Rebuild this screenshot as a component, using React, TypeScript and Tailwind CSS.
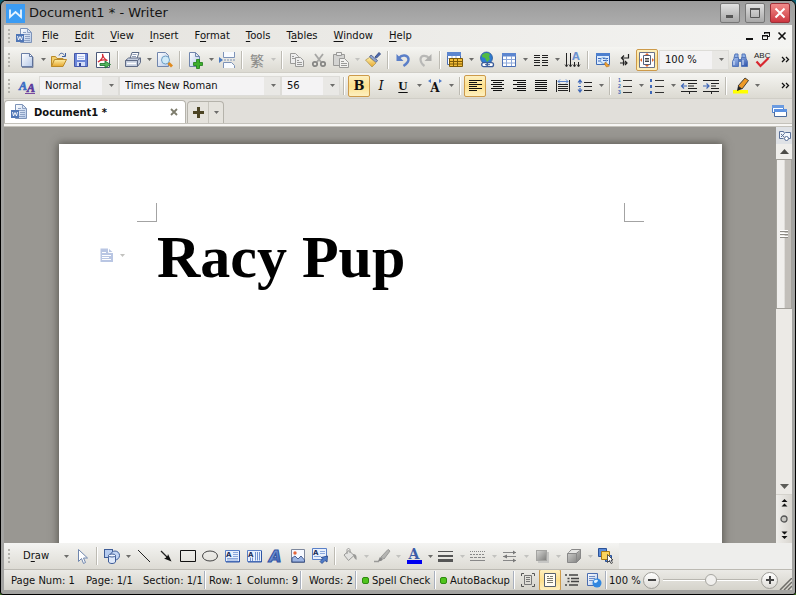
import { useState, type ReactNode } from "react"

interface IconProps {
  children: ReactNode
  size?: number
}

function Icon({ children, size = 16 }: IconProps) {
  return (
    <svg width={size} height={size} viewBox="0 0 16 16" fill="none" className="flex-shrink-0 overflow-visible" aria-hidden="true">
      {children}
    </svg>
  )
}

/* Gradients shared by the icons below */
function IconDefs() {
  return (
    <svg width="0" height="0" className="absolute" aria-hidden="true">
      <defs>
        <linearGradient id="paper" x1="0" y1="0" x2="1" y2="1">
          <stop offset="0" stopColor="#ffffff" />
          <stop offset="1" stopColor="#b4c8e8" />
        </linearGradient>
        <linearGradient id="blue" x1="0" y1="0" x2="1" y2="1">
          <stop offset="0" stopColor="#a9c4f2" />
          <stop offset="1" stopColor="#2b50a8" />
        </linearGradient>
        <linearGradient id="gold" x1="0" y1="0" x2="0" y2="1">
          <stop offset="0" stopColor="#fff0a8" />
          <stop offset="1" stopColor="#e5a52c" />
        </linearGradient>
        <linearGradient id="grey" x1="0" y1="0" x2="1" y2="1">
          <stop offset="0" stopColor="#d8d8d6" />
          <stop offset="1" stopColor="#7c7c7a" />
        </linearGradient>
      </defs>
    </svg>
  )
}

const BLUE = "#3f68b8"
const DIM = "#9a9a98"

const DocIcon = () => (
  <Icon>
    <path d="M4.500.5h7l4 4v10h-11z" fill="url(#paper)" stroke="#7d93b8" />
    <path d="M11.500.5v4h4M7 4.500h3M7 6.500h7M9 8.500h5M9 10.500h5M7 12.500h7" stroke="#8ea2c4" />
    <path d="M0 6h8v8H0z" fill="#4f76b6" />
    <path d="M1.500 8l1 4L4 8.500 5.500 12l1-4" stroke="#fff" strokeWidth=".9" />
  </Icon>
)
const NewIcon = () => (
  <Icon>
    <path d="M2.500 1.500h8l3 3v10h-11z" fill="url(#paper)" stroke="#6a7ea6" />
    <path d="M10.500 1.500v3h3z" fill="#fff" stroke="#6a7ea6" />
    <path d="M3 15.500h11V5" stroke="#3f5078" strokeWidth=".6" />
  </Icon>
)
const OpenIcon = () => (
  <Icon>
    <path d="M.5 14.500v-10h4l1.500 2h6v3" fill="#f2cf6c" stroke="#b98a2a" />
    <path d="M.5 14.500l3-7h12l-3.500 7z" fill="url(#gold)" stroke="#b98a2a" />
    <path d="M8 3.500c1-3 4-3 5.500 0M14.500 1v3.500H11" stroke="#3f5f9e" />
  </Icon>
)
const SaveIcon = () => (
  <Icon>
    <path d="M1.500 1.500h13v13h-13z" fill="#6b86d8" stroke="#4457a8" />
    <path d="M4 2h8v6H4z" fill="#f3f6ff" />
    <path d="M5 4.500h6M5 6.500h6" stroke="#b6c4ea" />
    <path d="M4 10h8v4H4z" fill="#d4ddf8" />
    <path d="M6 11h2v3H6z" fill="#35499a" />
  </Icon>
)
const PdfIcon = () => (
  <Icon>
    <path d="M1.500.5h13v15h-13z" fill="#fff" stroke="#4a5878" />
    <path d="M7.500 2c1 3-1 6-4.500 8 2-2 6-2.500 9.500-1.500C9 7 8 5 7.500 2z" stroke="#d42a35" strokeWidth="1.300" />
    <path d="M5 11.500h5V9l5.500 3.500L10 16v-2.500H5z" fill="#52b45c" stroke="#16702a" strokeWidth=".8" />
  </Icon>
)
const PrintIcon = () => (
  <Icon>
    <path d="M5 6.500L7 .5h7l-2 6z" fill="#fff" stroke="#5a6984" />
    <path d="M7.500 2.500h4M7 4.500h4" stroke="#92a0ba" />
    <path d="M.5 8.500l3-2.500h12v4.500l-3 4H.5z" fill="#c6cfdf" stroke="#5f6b85" />
    <path d="M.5 8.500h12v6M12.500 8.500l3-2.500" stroke="#5f6b85" />
    <path d="M2 11.500h9" stroke="#fff" strokeWidth="1.500" />
  </Icon>
)
const PreviewIcon = () => (
  <Icon>
    <path d="M.5.5h8l3 3v11H.5z" fill="url(#paper)" stroke="#7186ad" />
    <circle cx="8.500" cy="8" r="4" fill="#cfeaf8" stroke="#6f9fc4" />
    <path d="M11.500 11l3.500 3.500" stroke="#e08a1e" strokeWidth="2.800" />
  </Icon>
)
const AddPageIcon = () => (
  <Icon>
    <path d="M2.500.5h6l4 4v10h-10z" fill="url(#paper)" stroke="#7186ad" />
    <path d="M8.500.5v4h4" stroke="#7186ad" />
    <path d="M9.500 7.500h3v3h3v3h-3v3h-3v-3h-3v-3h3z" fill="#3fae2c" stroke="#1d7d18" strokeWidth=".8" />
  </Icon>
)
const BreakIcon = () => (
  <Icon>
    <path d="M4.500 0v5.500h11V0M4.500 16v-5.500h8l3 3V16" fill="#f8fbff" stroke="#7d93b8" />
    <path d="M5 8h11" stroke="#7d93b8" strokeDasharray="2 1" />
    <path d="M0 5l4 3-4 3z" fill="#4a7ac0" />
  </Icon>
)
const CopyIcon = () => (
  <Icon>
    <path d="M1.500 1.500h5l3 3v7h-8z" fill="#eee" stroke={DIM} />
    <path d="M6.500 5.500h5l3 3v6h-8z" fill="#eee" stroke={DIM} />
    <path d="M3 4.500h2M3 6.500h3M8 8.500h2M8 10.500h5M8 12.500h5" stroke={DIM} />
  </Icon>
)
const CutIcon = () => (
  <Icon>
    <path d="M4 2l6 8M12 2L6 10" stroke="#a6a6a4" strokeWidth="1.800" />
    <circle cx="4" cy="12" r="2.200" stroke="#858583" strokeWidth="1.700" />
    <circle cx="12" cy="12" r="2.200" stroke="#858583" strokeWidth="1.700" />
  </Icon>
)
const PasteIcon = () => (
  <Icon>
    <path d="M.5 2.500h11v11H.5z" fill="#d4d4d2" stroke={DIM} />
    <path d="M3.500.5h5v3h-5z" fill="#eee" stroke={DIM} />
    <path d="M6.500 6.500h5l4 4v5h-9z" fill="#f2f2f0" stroke={DIM} />
    <path d="M8 9.500h3M8 11.500h6M8 13.500h6" stroke={DIM} />
  </Icon>
)
const BrushIcon = () => (
  <Icon>
    <path d="M10 5l4-4.500 1.500 1.500L11.500 6z" fill="#4a68b4" stroke="#3a5286" />
    <path d="M6 3l6.500 5.500-1.500 2L4.500 5z" fill="#8fa4d0" stroke="#5a6c98" />
    <path d="M4.500 5.500l6.500 5.500-4 4L.5 8z" fill="url(#gold)" stroke="#b09858" strokeWidth=".8" />
  </Icon>
)
const UndoIcon = () => (
  <Icon>
    <path d="M4 6c3-4 9-3 9.500 1 .3 3-2 5-5 7" stroke="#5b7fc8" strokeWidth="2.400" />
    <path d="M1.500 2v7h7z" fill="#5b7fc8" />
  </Icon>
)
const RedoIcon = () => (
  <Icon>
    <path d="M12 6C9 3 4 3 3.500 7c0 3 1 5 4 7" stroke="#b8b8b6" strokeWidth="2.200" />
    <path d="M14.500 2v7h-7z" fill="#b0b0ae" />
  </Icon>
)
const TableGoldIcon = () => (
  <Icon>
    <path d="M.5.5h13v12H.5z" fill="#fff" stroke="#4a6eb4" />
    <path d="M0 0h14v4H0z" fill="#5c86cf" />
    <path d="M1 6.500h12M5 4v8M9 4v8" stroke="#9cb4de" />
    <path d="M2.500 6.500h13v8h-13z" fill="#f3bd38" stroke="#7d5a08" />
    <path d="M3 9.500h12M3 12h12M6.500 7v7M10.500 7v7" stroke="#7d5a08" />
  </Icon>
)
const GlobeIcon = () => (
  <Icon>
    <circle cx="7.500" cy="6" r="6" fill="#2f7bd0" stroke="#1c4c8c" strokeWidth=".7" />
    <path d="M3 3c3-3 6-2 8-1l-1 3 1 2-3 3-2-4-3-1z" fill="#52bb42" />
    <rect x="2.700" y="10.700" width="6.500" height="4" rx="2" fill="#fff" stroke="#3b5c9a" strokeWidth="1.300" />
    <rect x="8" y="10.700" width="6.500" height="4" rx="2" fill="#fff" stroke="#3b5c9a" strokeWidth="1.300" />
    <path d="M6 12.700h5" stroke="#3b5c9a" />
  </Icon>
)
const TableIcon = () => (
  <Icon>
    <path d="M1.500 1.500h13v13h-13z" fill="#fff" stroke="#4a6eb4" />
    <path d="M1 1h14v3.500H1z" fill="#5c86cf" />
    <path d="M2 7.500h12M2 11h12M5.500 4v10M10.500 4v10" stroke="#8ca8da" />
  </Icon>
)
const ColumnsIcon = () => (
  <Icon>
    <path d="M1 3.500h6M1 5.500h6M1 8.500h6M1 10.500h6M1 13.500h6M9 3.500h6M9 5.500h6M9 8.500h6M9 10.500h6M9 13.500h6" stroke="#222" />
  </Icon>
)
const VerticalIcon = () => (
  <Icon>
    <path d="M1.500 1v13M5.500 1v13M9.500 10v4M13.500 10v4" stroke="#222" />
    <path d="M0 12.500l1.500 2.500L3 12.500M4 12.500l1.500 2.500L7 12.500M8 12.500l1.500 2.500 1.500-2.500M12 12.500l1.500 2.500 1.500-2.500" stroke="#222" strokeWidth=".8" />
    <text x="7" y="8" fontSize="10" fontWeight="bold" fill="#6d92d0">A</text>
  </Icon>
)
const InspectIcon = () => (
  <Icon>
    <path d="M1.500 1.500h13v11h-13z" fill="#dcebfd" stroke="#3e6cb8" />
    <path d="M1 1h14v3H1z" fill="#4d80ce" />
    <path d="M3 6.500h3M3 9h3M8 6.500h5M8 8.500h5" stroke={BLUE} />
    <circle cx="8.500" cy="8.500" r="3" stroke="#78aadc" />
    <path d="M10.500 10l4 4-3 1-2-3z" fill="#efa030" stroke="#a8630e" strokeWidth=".5" />
  </Icon>
)
const MarksIcon = () => (
  <Icon>
    <path d="M11.500 2v4H4.500M7 3.500L4.500 6 7 8.500" stroke="#222" strokeWidth="1.200" />
    <path d="M3 11h7M6.500 8.500v5M8 9l2 2-2 2" stroke="#222" strokeWidth="1.200" />
  </Icon>
)
const PageBorderIcon = () => (
  <Icon>
    <path d="M.5.5h15v15H.5z" fill="#fdfdfd" stroke="#6a7288" />
    <path d="M4.500 3.500h7v9h-7z" fill="#fff" stroke="#55617c" />
    <path d="M6 6.500h4M6 8h4M6 9.500h4" stroke="#444" />
    <path d="M8 1l2 2H6zM8 15l2-2H6zM1 8l2-2v4zM15 8l-2-2v4z" fill="#e0662a" />
  </Icon>
)
const FindIcon = () => (
  <Icon>
    <path d="M2 6l1-4h3v4M10 6V2h3l1 4" fill="#8fb0e6" stroke="#5577b8" />
    <path d="M.5 14.500v-5l2-4h4v9zM9.500 14.500v-9h4l2 4v5z" fill="url(#blue)" stroke="#5577b8" />
    <path d="M7 7h2v3H7z" fill="#5577b8" />
    <path d="M2 9v4M11 8v5" stroke="#dbe7fb" />
  </Icon>
)
const SpellIcon = () => (
  <Icon>
    <text x="0" y="6" fontSize="8" fill="#222" className="font-['Liberation_Sans']">ABC</text>
    <path d="M2.500 9.500l4 4.500 8-8" stroke="#d8272f" strokeWidth="2.200" />
  </Icon>
)

const StylesIcon = () => (
  <Icon>
    <g className="font-['Liberation_Serif']" fontSize="12" fontWeight="bold" fontStyle="italic" strokeWidth=".6">
      <text x="0" y="12" fill="#3a6cc4" stroke="#3a6cc4">A</text>
      <text x="8" y="14" fill="#5a3a9c" stroke="#5a3a9c">A</text>
    </g>
    <path d="M6 15.500h10" stroke="#7a4aa0" />
  </Icon>
)
interface AlignProps {
  rows: string
}
const AlignIcon = ({ rows }: AlignProps) => (
  <Icon>
    <path d={rows} stroke="#111" />
  </Icon>
)
const DistributeIcon = () => (
  <Icon>
    <path d="M1.500 2v12M14.500 2v12M3 6.500h10M3 8.500h10M3 10.500h10M3 12.500h10" stroke="#222" />
    <path d="M3 3.500h10M5 1.500l-2 2 2 2M11 1.500l2 2-2 2" stroke="#5d86cc" />
  </Icon>
)
const LineSpacingIcon = () => (
  <Icon>
    <path d="M7 4.500h8M7 8.500h8M7 12.500h8" stroke="#222" />
    <path d="M3 2v4M1 4.500L3 2l2 2.500M3 10v4M1 11.500L3 14l2-2.500M1 8.500h3" stroke={BLUE} strokeWidth="1.200" />
  </Icon>
)
const NumberedIcon = () => (
  <Icon>
    <path d="M6 2.500h9M6 8.500h9M6 14.500h9" stroke="#333" />
    <g className="font-['Liberation_Sans']" fontSize="5" fontWeight="bold" fill={BLUE}>
      <text x="1" y="4">1</text>
      <text x="1" y="10">2</text>
      <text x="1" y="16">3</text>
    </g>
  </Icon>
)
const BulletsIcon = () => (
  <Icon>
    <path d="M6 2.500h9M6 8.500h9M6 14.500h9" stroke="#333" />
    <path d="M1 1h2v3H1zM1 7h2v3H1zM1 13h2v3H1z" fill={BLUE} />
  </Icon>
)
const OutdentIcon = () => (
  <Icon>
    <path d="M0 2.500h16M7 5.500h9M7 8h6M7 10.500h9M0 13.500h16M8.500 13v3" stroke="#222" />
    <path d="M0 8h6M3 5.500L.5 8 3 10.500" stroke={BLUE} strokeWidth="1.200" />
  </Icon>
)
const IndentIcon = () => (
  <Icon>
    <path d="M0 2.500h16M8 5.500h8M8 8h5M8 10.500h8M0 13.500h16M8.500 13v3" stroke="#222" />
    <path d="M0 8h6M3.500 5.500L6 8l-2.500 2.500" stroke={BLUE} strokeWidth="1.200" />
  </Icon>
)
const HighlightIcon = () => (
  <Icon>
    <path d="M0 12h15v3.500H0z" fill="#ffff00" />
    <path d="M5 8l7-8 3.500 2.500L9 11z" fill="#ee9a28" stroke="#222" strokeWidth=".8" />
    <path d="M5 8l4 3-5 2z" fill="#222" />
  </Icon>
)

const PointerIcon = () => (
  <Icon>
    <path d="M4.500 1.500v12l3-3 2 5 2-1-2-4.500h4z" fill="#fff" stroke="#6f86ae" />
  </Icon>
)
const ShapesIcon = () => (
  <Icon>
    <rect x=".5" y="1.500" width="8" height="8" fill="#b6ccf0" stroke="#3f5d98" />
    <circle cx="11" cy="7.500" r="4.500" fill="#c4d6f4" stroke="#3f5d98" />
    <path d="M4.500 7.500h7v6.500c-1 2-6 2-7 0z" fill="#dfe9fa" stroke="#3f5d98" />
    <ellipse cx="8" cy="7.500" rx="3.500" ry="1.500" fill="#f4f8ff" stroke="#3f5d98" />
  </Icon>
)
const LineIcon = () => (
  <Icon>
    <path d="M2 2l12 12" stroke="#222" />
  </Icon>
)
const ArrowIcon = () => (
  <Icon>
    <path d="M3 3l7 7" stroke="#222" strokeWidth="1.200" />
    <path d="M13.500 13.500L6 10.500l1.500-.5 2-2 .5-2z" fill="#111" />
  </Icon>
)
const RectIcon = () => (
  <Icon>
    <path d="M.5 2.500h15v11H.5z" stroke="#111" />
  </Icon>
)
const EllipseIcon = () => (
  <Icon>
    <ellipse cx="8" cy="8" rx="7.500" ry="5" stroke="#444" />
  </Icon>
)
const TextBoxIcon = () => (
  <Icon>
    <path d="M1.500 2.500h14v11h-14z" fill="#e9f0fc" stroke="#5a80c8" />
    <path d="M9 4.500h5M9 6.500h5M9 8.500h5M3 10.500h11M3 12h11" stroke="#8ba8dc" />
    <path d="M15.500 3v11H2" stroke="#2f55a4" />
    <text x="2" y="9" fontSize="7" fontWeight="bold" fill="#1a2c58">A</text>
  </Icon>
)
const VTextBoxIcon = () => (
  <Icon>
    <path d="M1.500 2.500h14v11h-14z" fill="#e9f0fc" stroke="#5a80c8" />
    <path d="M4.500 9.500V13M6.500 9.500V13M9.500 4v8.500M11.500 4v8.500M13.500 4v8.500" stroke="#6f92d0" />
    <path d="M15.500 3v11H2" stroke="#2f55a4" />
    <text x="2" y="9" fontSize="7" fontWeight="bold" fill="#1a2c58">A</text>
  </Icon>
)
const WordArtIcon = () => (
  <Icon>
    <text x="1" y="14" fontSize="16" fontWeight="bold" fontStyle="italic" fill="url(#blue)" stroke="#3457a6" strokeWidth="1.200">A</text>
  </Icon>
)
const PictureIcon = () => (
  <Icon>
    <path d="M1.500 1.500h13v13h-13z" fill="#f7f9ff" stroke="#7d879c" />
    <path d="M2 14v-4l3-2 3 3 3-3 3.500 4v2z" fill="#9cb4e2" stroke="#2c447e" strokeWidth=".8" />
    <circle cx="5" cy="5" r="1.700" fill="#e5663a" />
  </Icon>
)
const TextFrameIcon = () => (
  <Icon>
    <path d="M.5.5h14v11H.5z" fill="#e9f0fc" stroke="#5a80c8" />
    <path d="M8 3.500h5M8 5.500h5M2 8.500h7" stroke="#8ba8dc" />
    <text x="1" y="7" fontSize="7" fontWeight="bold" fill="#1a2c58">A</text>
    <path d="M9 9.500l6.500-1.500-.5 6-2-1.500-3 3-2-2 3-3z" fill="#4f7bc8" stroke="#24458a" strokeWidth=".8" />
  </Icon>
)
const FillIcon = () => (
  <Icon>
    <path d="M2 7l5-4.500 5 5-5.500 5z" fill="#e2e2e0" stroke={DIM} />
    <path d="M5 6V2c0-2 3-2 3 0v3" stroke={DIM} />
    <path d="M11 6c3 0 4 2 3.500 6-2-1-3-3-3.500-6z" fill={DIM} />
  </Icon>
)
const PenIcon = () => (
  <Icon>
    <path d="M7 9l7-7.500 2 1.500-6 8z" fill="#b4b4b2" stroke={DIM} />
    <path d="M6 9l3 2c-1 2-3 2.500-5 2 1-1 1-3 2-4z" fill="#888" />
    <path d="M0 13.500h5" stroke={DIM} strokeWidth="1.500" />
  </Icon>
)
const LineWidthIcon = () => (
  <Icon>
    <path d="M0 3.500h15" stroke="#555" />
    <path d="M0 8h15" stroke="#555" strokeWidth="2" />
    <path d="M0 12.500h15" stroke="#555" strokeWidth="3" />
  </Icon>
)
const DashIcon = () => (
  <Icon>
    <path d="M0 3.500h15" stroke="#888" strokeDasharray="1 1" />
    <path d="M0 6.500h15" stroke="#888" strokeDasharray="2 1" />
    <path d="M0 9.500h15" stroke="#888" strokeDasharray="3 1" />
    <path d="M0 12.500h15" stroke="#888" />
  </Icon>
)
const ArrowStyleIcon = () => (
  <Icon>
    <path d="M1 4.500h13M1 8.500h13M1 12.500h13" stroke="#888" />
    <path d="M11 2.500l3 2-3 2zM5 6.500l-4 2 4 2zM11 10.500l3 2-3 2z" fill="#777" />
  </Icon>
)
const ShadowIcon = () => (
  <Icon>
    <rect x="4" y="4" width="11" height="11" fill="#c6c6c4" />
    <rect x="2.500" y="2.500" width="10" height="10" fill="url(#grey)" stroke="#a4a4a2" />
  </Icon>
)
const CubeIcon = () => (
  <Icon>
    <path d="M1.500 5.500l4-4h9v9l-4 4h-9z" fill="url(#grey)" stroke="#888" />
    <path d="M1.500 5.500h9v9M10.500 5.500l4-4" stroke="#888" />
    <path d="M2 5l4-3h8l-4 3z" fill="#e6e6e4" />
  </Icon>
)
const SelectObjectsIcon = () => (
  <Icon>
    <path d="M.5.5h8v8h-8z" fill="#5a8bd8" stroke="#2c5297" />
    <path d="M7.500 7.500h6v6h-6z" fill="#5a8bd8" stroke="#2c5297" />
    <path d="M3.500 3.500h8v8h-8z" fill="#fbd45c" stroke="#a87a14" />
    <path d="M9.500 6.500v8l2-2 1.500 3 1.500-.7-1.500-2.800H15z" fill="#fff" stroke="#333" strokeWidth=".8" />
  </Icon>
)

const FullScreenIcon = () => (
  <Icon>
    <path d="M1.500 4V1.500H4M12 1.500h2.500V4M1.500 12v2.500H4M12 14.500h2.500V12" stroke="#555" />
    <path d="M4.500 3.500h7v9h-7zM6 5.500h4M6 7.500h4M6 9.500h4" stroke="#777" />
  </Icon>
)
const PageViewIcon = () => (
  <Icon>
    <path d="M2.500 1.500h11v13h-11z" fill="#fffdf2" stroke="#55606e" />
    <path d="M5 4.500h2M8 4.500h3M5 6.500h6M5 8.500h6M5 10.500h6" stroke="#7a7a70" />
  </Icon>
)
const OutlineIcon = () => (
  <Icon>
    <path d="M5 3h9M7 6.500h8M7 9.500h8M5 13h9" stroke="#444" strokeWidth="1.400" />
    <path d="M1 3h2M3.500 6.500h2M3.500 9.500h2M1 13h2" stroke="#444" strokeWidth="1.400" />
  </Icon>
)
const WebViewIcon = () => (
  <Icon>
    <path d="M1.500 1.500h10v12h-10z" fill="url(#paper)" stroke="#4a6db0" />
    <path d="M3 4.500h6M3 6.500h6M3 8.500h4" stroke="#6f8dc6" />
    <circle cx="11" cy="11" r="4.500" fill="#3187e0" />
    <path d="M8 9c2-2 4-1 4 0l-2 2-2-.5z" fill="#dff2ff" />
  </Icon>
)

interface CaretProps {
  dim?: boolean
}

function Caret({ dim }: CaretProps) {
  return (
    <svg width="5" height="3" viewBox="0 0 5 3" className="flex-shrink-0" aria-hidden="true">
      <path d="M0 0h5L2.500 3z" fill={dim ? "#c2c2bf" : "#6c6c6a"} />
    </svg>
  )
}

interface ToolProps {
  label: string
  icon: ReactNode
  active?: boolean
}

function Tool({ label, icon, active }: ToolProps) {
  return (
    <button
      aria-label={label}
      title={label}
      aria-pressed={active}
      className={`flex h-[22px] w-[22px] flex-shrink-0 items-center justify-center rounded-[2px] ${
        active ? "border border-[#cd9a4a] bg-linear-to-b from-[#fdf0c0] via-[#fde08c] to-[#fdf0c0]" : "hover:bg-white/60"
      }`}
    >
      {icon}
    </button>
  )
}

interface MoreProps {
  label: string
  dim?: boolean
}

function More({ label, dim }: MoreProps) {
  return (
    <button aria-label={label} className="flex h-[22px] w-[10px] flex-shrink-0 items-center justify-center">
      <Caret dim={dim} />
    </button>
  )
}

function Sep() {
  return (
    <span className="flex w-2 flex-shrink-0 justify-center">
      <span className="h-[18px] w-[2px] border-l border-[#bdbbb3] bg-white" />
    </span>
  )
}

function Grip() {
  return (
    <span className="flex w-3 flex-shrink-0 flex-col gap-[2px] pl-1">
      <span className="h-[2px] w-[2px] bg-[#b3b2ac]" />
      <span className="h-[2px] w-[2px] bg-[#b3b2ac]" />
      <span className="h-[2px] w-[2px] bg-[#b3b2ac]" />
      <span className="h-[2px] w-[2px] bg-[#b3b2ac]" />
    </span>
  )
}

interface ComboProps {
  label: string
  options: string[]
  width: string
}

function Combo({ label, options, width }: ComboProps) {
  return (
    <label className={`flex h-5 flex-shrink-0 items-center border border-[#dddcd8] bg-[#e9e8e5] pr-1 ${width}`}>
      <select aria-label={label} className="h-full min-w-0 flex-1 appearance-none bg-[#f4f3f4] pl-[5px] outline-none">
        {options.map((o) => (
          <option key={o}>{o}</option>
        ))}
      </select>
      <span className="flex w-[12px] justify-end">
        <Caret />
      </span>
    </label>
  )
}

function Overflow() {
  return (
    <button aria-label="More buttons" className="ml-auto flex h-[22px] w-[14px] items-center justify-center">
      <svg width="9" height="7" viewBox="0 0 9 7" fill="none" aria-hidden="true">
        <path d="M1 1l2.500 2.500L1 6M5 1l2.500 2.500L5 6" stroke="#111" strokeWidth="1.300" />
      </svg>
    </button>
  )
}

const BAR = "flex h-[26px] flex-shrink-0 items-center overflow-hidden border-b border-[#d0cec7] bg-linear-to-b from-[#f5f5f2] to-[#dcdad2]"

function TitleBar() {
  const btn = "flex h-5 w-5 items-center justify-center rounded-[2px] border"
  return (
    <header className="flex h-6 flex-shrink-0 items-center bg-linear-to-b from-[#9c9c9c] to-[#adadad] pr-[2px] pl-[2px]">
      <svg width="19" height="19" viewBox="0 0 19 19" fill="none" aria-hidden="true">
        <rect width="19" height="19" fill="#3b9cf4" />
        <path d="M4 5.500v7.500l5.500-5 5.500 5V5.500" stroke="#e8f4ff" strokeWidth="1.800" />
      </svg>
      <h1 className="ml-1 flex-1 text-[13px] leading-5 text-[#151515]">Document1 * - Writer</h1>
      <div className="flex gap-[5px]">
        <button aria-label="Minimize" className={`${btn} border-[#777] bg-linear-to-b from-[#e2e2e2] to-[#a8a8a8]`}>
          <svg width="12" height="12" viewBox="0 0 12 12" aria-hidden="true">
            <path d="M2 8h7v3H2z" fill="#555" />
          </svg>
        </button>
        <button aria-label="Maximize" className={`${btn} border-[#777] bg-linear-to-b from-[#e2e2e2] to-[#a8a8a8]`}>
          <svg width="12" height="12" viewBox="0 0 12 12" fill="none" aria-hidden="true">
            <path d="M1.500 1.500h9v9h-9z" stroke="#555" />
            <path d="M1 1h10v2H1z" fill="#555" />
          </svg>
        </button>
        <button aria-label="Close" className={`${btn} border-[#9c3038] bg-linear-to-b from-[#f08b8b] to-[#cd3440]`}>
          <svg width="12" height="12" viewBox="0 0 12 12" fill="none" aria-hidden="true">
            <path d="M1.500 1.500l9 9M10.500 1.500l-9 9" stroke="#fff" strokeWidth="2" />
          </svg>
        </button>
      </div>
    </header>
  )
}

/* [before, mnemonic, after] */
const MENUS = [
  ["", "F", "ile"],
  ["", "E", "dit"],
  ["", "V", "iew"],
  ["", "I", "nsert"],
  ["F", "o", "rmat"],
  ["", "T", "ools"],
  ["T", "a", "bles"],
  ["", "W", "indow"],
  ["", "H", "elp"],
]

function MenuBar() {
  return (
    <nav className="flex h-[22px] flex-shrink-0 items-center bg-linear-to-r from-[#e4e2dd] to-[#f4f4f2]">
      <Grip />
      <DocIcon />
      <div className="flex flex-1 gap-4 pl-[10px]">
        {MENUS.map(([pre, key, post]) => (
          <button key={pre + key + post} className="leading-4">
            {pre}
            <span className="underline underline-offset-2">{key}</span>
            {post}
          </button>
        ))}
      </div>
      <div className="flex items-center gap-[2px] pr-[3px]">
        <button aria-label="Minimize document" className="flex h-4 w-[14px] items-center justify-center">
          <svg width="10" height="10" viewBox="0 0 10 10" aria-hidden="true">
            <path d="M1 7h7v2H1z" fill="#111" />
          </svg>
        </button>
        <button aria-label="Restore document" className="flex h-4 w-[14px] items-center justify-center">
          <svg width="10" height="10" viewBox="0 0 10 10" fill="none" aria-hidden="true">
            <path d="M3.500 3V1.500h5v4H7M1.500 4.500h5v4h-5z" stroke="#111" />
            <path d="M3 1h6v1.500H3zM1 4h6v1.500H1z" fill="#111" />
          </svg>
        </button>
        <button aria-label="Close document" className="flex h-4 w-[14px] items-center justify-center">
          <svg width="10" height="10" viewBox="0 0 10 10" fill="none" aria-hidden="true">
            <path d="M1.500 1.500l7 7M8.500 1.500l-7 7" stroke="#111" strokeWidth="1.600" />
          </svg>
        </button>
      </div>
    </nav>
  )
}

function StandardBar() {
  return (
    <div role="toolbar" aria-label="Standard" className={BAR}>
      <Grip />
      <Tool label="New" icon={<NewIcon />} />
      <More label="New options" />
      <Tool label="Open" icon={<OpenIcon />} />
      <Tool label="Save" icon={<SaveIcon />} />
      <Tool label="Export to PDF" icon={<PdfIcon />} />
      <Sep />
      <Tool label="Print" icon={<PrintIcon />} />
      <More label="Print options" />
      <Tool label="Print Preview" icon={<PreviewIcon />} />
      <Sep />
      <Tool label="Insert Page" icon={<AddPageIcon />} />
      <More label="Page options" />
      <Tool label="Break" icon={<BreakIcon />} />
      <Sep />
      <Tool
        label="Chinese Conversion"
        icon={<span className="font-['Noto_Sans_CJK_TC',sans-serif] text-[14px] leading-4 text-[#8a8a88]">繁</span>}
      />
      <More label="Chinese Conversion options" dim />
      <Sep />
      <Tool label="Copy" icon={<CopyIcon />} />
      <Tool label="Cut" icon={<CutIcon />} />
      <Tool label="Paste" icon={<PasteIcon />} />
      <More label="Paste options" dim />
      <Tool label="Format Painter" icon={<BrushIcon />} />
      <Sep />
      <Tool label="Undo" icon={<UndoIcon />} />
      <Tool label="Redo" icon={<RedoIcon />} />
      <Sep />
      <Tool label="Table Tools" icon={<TableGoldIcon />} />
      <More label="Table Tools options" />
      <Tool label="Hyperlink" icon={<GlobeIcon />} />
      <Tool label="Insert Table" icon={<TableIcon />} />
      <More label="Table options" />
      <Tool label="Columns" icon={<ColumnsIcon />} />
      <More label="Columns options" />
      <Tool label="Text Direction" icon={<VerticalIcon />} />
      <Sep />
      <Tool label="Inspect" icon={<InspectIcon />} />
      <Tool label="Show Marks" icon={<MarksIcon />} />
      <Tool label="Page Borders" icon={<PageBorderIcon />} active />
      <Combo label="Zoom" options={["100 %", "75 %", "50 %"]} width="w-[70px] ml-px" />
      <Tool label="Find" icon={<FindIcon />} />
      <Tool label="Spell Check" icon={<SpellIcon />} />
      <Overflow />
    </div>
  )
}

function FormatBar() {
  return (
    <div role="toolbar" aria-label="Formatting" className={BAR}>
      <Grip />
      <Tool label="Styles" icon={<StylesIcon />} />
      <Combo label="Style" options={["Normal", "Heading 1"]} width="w-[80px] ml-px" />
      <Combo label="Font" options={["Times New Roman", "Arial"]} width="w-[162px]" />
      <Combo label="Font size" options={["56", "12", "10"]} width="w-[59px]" />
      <Sep />
      <Tool label="Bold" active icon={<b className="font-['DejaVu_Serif'] text-[13px] leading-4">B</b>} />
      <Tool label="Italic" icon={<i className="font-['DejaVu_Serif'] text-[13px] leading-4">I</i>} />
      <Tool label="Underline" icon={<b className="font-['Liberation_Serif'] text-[13px] leading-4 underline underline-offset-2">U</b>} />
      <More label="Underline options" />
      <Tool
        label="Character Scale"
        icon={
          <span className="flex flex-col items-center">
            <svg width="14" height="4" viewBox="0 0 14 4" aria-hidden="true">
              <path d="M0 2l3-2v4zM14 2l-3-2v4z" fill="#4f7bc8" />
            </svg>
            <b className="font-['DejaVu_Serif'] text-[12px] leading-[10px]">A</b>
          </span>
        }
      />
      <More label="Character Scale options" />
      <Sep />
      <Tool label="Align Left" active icon={<AlignIcon rows="M2 2.500h13M2 4.500h8M2 6.500h13M2 8.500h8M2 10.500h13M2 12.500h8" />} />
      <Tool label="Center" icon={<AlignIcon rows="M2 2.500h13M4 4.500h9M2 6.500h13M4 8.500h9M2 10.500h13M4 12.500h9" />} />
      <Tool label="Align Right" icon={<AlignIcon rows="M2 2.500h13M6 4.500h9M2 6.500h13M6 8.500h9M2 10.500h13M6 12.500h9" />} />
      <Tool label="Justify" icon={<AlignIcon rows="M2 2.500h12M2 4.500h12M2 6.500h12M2 8.500h12M2 10.500h12M2 12.500h12" />} />
      <Tool label="Distribute" icon={<DistributeIcon />} />
      <Tool label="Line Spacing" icon={<LineSpacingIcon />} />
      <More label="Line Spacing options" />
      <Sep />
      <Tool label="Numbering" icon={<NumberedIcon />} />
      <More label="Numbering options" />
      <Tool label="Bullets" icon={<BulletsIcon />} />
      <More label="Bullets options" />
      <Tool label="Decrease Indent" icon={<OutdentIcon />} />
      <Tool label="Increase Indent" icon={<IndentIcon />} />
      <Sep />
      <Tool label="Highlight" icon={<HighlightIcon />} />
      <More label="Highlight options" />
      <Overflow />
    </div>
  )
}

function TabBar() {
  return (
    <div className="flex-shrink-0 bg-[#e1dfda]">
      <div className="flex h-6 items-end pr-1">
        <div className="flex h-[23px] w-[182px] items-center rounded-t-[4px] border border-b-0 border-[#b5b3ab] bg-white pr-[5px] pl-[6px]">
          <DocIcon />
          <span className="ml-[7px] flex-1 font-bold">Document1 *</span>
          <button aria-label="Close tab" className="flex h-4 w-3 items-center justify-center">
            <svg width="8" height="8" viewBox="0 0 8 8" fill="none" aria-hidden="true">
              <path d="M1 1l6 6M7 1L1 7" stroke="#7d7c6c" strokeWidth="1.800" />
            </svg>
          </button>
        </div>
        <div className="ml-px flex h-[22px] rounded-t-[4px] border border-b-0 border-[#b5b3ab] bg-[#e5e3dd]">
          <button aria-label="New tab" className="flex w-[21px] items-center justify-center border-r border-[#c8c6be]">
            <svg width="11" height="11" viewBox="0 0 11 11" aria-hidden="true">
              <path d="M4 0h3v4h4v3H7v4H4V7H0V4h4z" fill="#4c4423" />
            </svg>
          </button>
          <button aria-label="Tab list" className="flex w-[14px] items-center justify-center">
            <Caret />
          </button>
        </div>
        <button aria-label="Arrange windows" className="ml-auto flex h-6 w-4 items-center justify-center">
          <Icon>
            <path d="M.5 2.500h11v7H.5z" fill="#fff" stroke="#4d7fcb" />
            <path d="M0 2h12v3H0z" fill="#6b9be0" />
            <path d="M2.500 6.500h12v7h-12z" fill="#fff" stroke="#4a6a9c" />
            <path d="M2 6h13v3H2z" fill="#5c92e2" />
          </Icon>
        </button>
      </div>
      <div className="h-1 border-t border-b border-t-[#c4c2bb] border-b-[#c4c2bb] bg-[#f7f6f4]" />
    </div>
  )
}

function Page() {
  return (
    <main className="min-w-0 flex-1 overflow-hidden bg-[#999792] pt-[17px] pl-px">
      <article className="mx-auto h-[900px] w-[663px] max-w-full bg-white shadow-[0_0_8px_1px_rgba(60,58,52,0.7)]">
        <div className="flex justify-between px-[78px] pt-[59px]">
          <span className="h-[19px] w-5 border-r border-b border-[#a3a3a3]" />
          <span className="h-[19px] w-5 border-b border-l border-[#a3a3a3]" />
        </div>
        <div className="flex items-center pl-[41px]">
          <button aria-label="Paragraph layout" className="flex w-[57px] items-center gap-[6px] pb-1">
            <svg width="14" height="16" viewBox="0 0 14 16" fill="none" aria-hidden="true">
              <path d="M.5 1.500h8l4.500 4v9.500H.5z" fill="#b9c6e3" />
              <path d="M8.500 1v4.500H13M2 5.500h4M2 8.500h9M2 10.500h7M2 12.500h9" stroke="#fff" />
            </svg>
            <Caret dim />
          </button>
          <h2 className="font-['Liberation_Serif'] text-[60px] leading-[70px] font-bold text-black">Racy Pup</h2>
        </div>
      </article>
    </main>
  )
}

function ScrollBar() {
  const nav = "flex h-4 w-full items-center justify-center"
  return (
    <div className="flex w-4 flex-shrink-0 flex-col bg-[#eceae6]">
      <button aria-label="Browse" className="flex h-[17px] items-center justify-center bg-[#dfe2e6]">
        <svg width="13" height="13" viewBox="0 0 13 13" fill="none" aria-hidden="true">
          <path d="M1.500 2.500h4l1 2 1-1h5v6h-3M1.500 2.500v7h4" fill="#f2f6fc" stroke="#5a7098" />
          <path d="M3 5l3 3M6 5L3 8" stroke="#5a7098" />
          <circle cx="8.500" cy="9.500" r="2" fill="#fff" stroke="#5a7098" />
        </svg>
      </button>
      <button aria-label="Scroll up" className="flex h-[15px] items-center justify-center bg-[#efeeeb]">
        <svg width="9" height="5" viewBox="0 0 9 5" aria-hidden="true">
          <path d="M0 5h9L4.500 0z" fill="#4c4c48" />
        </svg>
      </button>
      <div className="flex-1">
        <div className="flex h-[150px] flex-col items-center justify-center gap-px border border-[#a3a19b] bg-linear-to-r from-[#f0efed] from-50% to-[#c2bfba] to-60%">
          <span className="h-[2px] w-2 border-b border-[#8d8b86] bg-white" />
          <span className="h-[2px] w-2 border-b border-[#8d8b86] bg-white" />
          <span className="h-[2px] w-2 border-b border-[#8d8b86] bg-white" />
        </div>
      </div>
      <button aria-label="Scroll down" className={nav}>
        <svg width="9" height="5" viewBox="0 0 9 5" aria-hidden="true">
          <path d="M0 0h9L4.500 5z" fill="#5c5c58" />
        </svg>
      </button>
      <div className="border-t border-[#d4d2cc] bg-linear-to-r from-[#efeeeb] to-[#d8d5cf]">
        <button aria-label="Previous page" className={nav}>
          <svg width="7" height="8" viewBox="0 0 7 8" aria-hidden="true">
            <path d="M3.500 0L6.500 3h-6zM3.500 4.500l3 3h-6z" fill="#111" />
          </svg>
        </button>
        <button aria-label="Select browse object" className={nav}>
          <svg width="8" height="8" viewBox="0 0 8 8" fill="none" aria-hidden="true">
            <circle cx="4" cy="4" r="3" fill="#c9c8c3" stroke="#555" strokeWidth="1.300" />
          </svg>
        </button>
        <button aria-label="Next page" className={nav}>
          <svg width="7" height="8" viewBox="0 0 7 8" aria-hidden="true">
            <path d="M.5.5h6l-3 3zM.5 5h6l-3 3z" fill="#111" />
          </svg>
        </button>
      </div>
    </div>
  )
}

function DrawBar() {
  return (
    <div className="flex-shrink-0 bg-[#eeeeec]">
      <div role="toolbar" aria-label="Drawing" className="flex h-[26px] w-max items-center bg-linear-to-b from-[#f4f4f2] to-[#dddbd4] pr-[2px]">
        <Grip />
        <button className="w-[45px] pl-[7px] text-left leading-4">
          D<span className="underline underline-offset-2">r</span>aw
        </button>
        <More label="Draw options" />
        <Tool label="Select" icon={<PointerIcon />} />
        <Sep />
        <Tool label="AutoShapes" icon={<ShapesIcon />} />
        <More label="AutoShapes options" />
        <Tool label="Line" icon={<LineIcon />} />
        <Tool label="Arrow" icon={<ArrowIcon />} />
        <Tool label="Rectangle" icon={<RectIcon />} />
        <Tool label="Ellipse" icon={<EllipseIcon />} />
        <Tool label="Text Box" icon={<TextBoxIcon />} />
        <Tool label="Vertical Text Box" icon={<VTextBoxIcon />} />
        <Tool label="WordArt" icon={<WordArtIcon />} />
        <Tool label="Picture" icon={<PictureIcon />} />
        <Tool label="Text Frame" icon={<TextFrameIcon />} />
        <Sep />
        <Tool label="Fill Color" icon={<FillIcon />} />
        <More label="Fill options" dim />
        <Tool label="Line Color" icon={<PenIcon />} />
        <More label="Line Color options" dim />
        <Tool
          label="Font Color"
          icon={
            <b className="w-[15px] border-b-4 border-[#0000f0] text-center font-['DejaVu_Serif'] text-[14px] leading-3 text-[#3b5ca8]">
              A
            </b>
          }
        />
        <More label="Font Color options" />
        <Tool label="Line Style" icon={<LineWidthIcon />} />
        <More label="Line Style options" dim />
        <Tool label="Dash Style" icon={<DashIcon />} />
        <More label="Dash Style options" dim />
        <Tool label="Arrow Style" icon={<ArrowStyleIcon />} />
        <More label="Arrow Style options" dim />
        <Tool label="Shadow" icon={<ShadowIcon />} />
        <More label="Shadow options" dim />
        <Tool label="3-D" icon={<CubeIcon />} />
        <More label="3-D options" dim />
        <Tool label="Select Objects" icon={<SelectObjectsIcon />} />
      </div>
    </div>
  )
}

function StatusSep() {
  return <span className="h-[18px] w-[2px] flex-shrink-0 border-l border-[#a9b0bd] bg-white" />
}

function Led() {
  return <span className="h-[7px] w-[7px] flex-shrink-0 rounded-[2px] border border-[#2f8a10] bg-[#4fc41c]" />
}

function StatusBar() {
  const [zoom, setZoom] = useState(50)
  const round = "flex h-[17px] w-[17px] flex-shrink-0 items-center justify-center rounded-full border border-[#9e9d98] bg-linear-to-b from-white to-[#dddbd6]"
  return (
    <footer className="flex h-[21px] flex-shrink-0 items-center overflow-hidden border-t border-[#bcbab3] bg-linear-to-b from-[#ebeae6] to-[#d5d3cb] whitespace-nowrap">
      <span className="w-[75px] flex-shrink-0 pl-[7px]">Page Num: 1</span>
      <span className="w-[57px] flex-shrink-0 pl-[7px]">Page: 1/1</span>
      <span className="w-[68px] flex-shrink-0 pl-[7px]">Section: 1/1</span>
      <StatusSep />
      <span className="w-[38px] flex-shrink-0 pl-[3px]">Row: 1</span>
      <span className="w-[56px] flex-shrink-0 pl-[3px]">Column: 9</span>
      <StatusSep />
      <span className="w-[53px] flex-shrink-0 pl-[7px]">Words: 2</span>
      <StatusSep />
      <button className="flex w-[77px] flex-shrink-0 items-center gap-[3px] pl-[5px]">
        <Led />
        Spell Check
      </button>
      <StatusSep />
      <button className="flex w-[77px] flex-shrink-0 items-center gap-[3px] pl-[4px]">
        <Led />
        AutoBackup
      </button>
      <StatusSep />
      <div className="flex flex-shrink-0 pl-[2px]">
        <Tool label="Full Screen" icon={<FullScreenIcon />} />
        <Tool label="Page View" icon={<PageViewIcon />} active />
        <Tool label="Outline View" icon={<OutlineIcon />} />
        <Tool label="Web View" icon={<WebViewIcon />} />
      </div>
      <StatusSep />
      <span className="w-[36px] flex-shrink-0 pl-[2px]">100 %</span>
      <button aria-label="Zoom out" className={round}>
        <span className="h-[2px] w-2 bg-[#444]" />
      </button>
      <input
        type="range"
        aria-label="Zoom"
        value={zoom}
        onChange={(e) => setZoom(Number(e.target.value))}
        className="mx-[3px] h-4 min-w-0 flex-1 appearance-none bg-transparent [&::-webkit-slider-runnable-track]:h-[2px] [&::-webkit-slider-runnable-track]:border-b [&::-webkit-slider-runnable-track]:border-white [&::-webkit-slider-runnable-track]:bg-[#b8b6b0] [&::-webkit-slider-thumb]:mt-[-5px] [&::-webkit-slider-thumb]:h-3 [&::-webkit-slider-thumb]:w-3 [&::-webkit-slider-thumb]:appearance-none [&::-webkit-slider-thumb]:rounded-full [&::-webkit-slider-thumb]:border [&::-webkit-slider-thumb]:border-[#a6a5a0] [&::-webkit-slider-thumb]:bg-[#f1f0ee]"
      />
      <button aria-label="Zoom in" className={round}>
        <svg width="8" height="8" viewBox="0 0 8 8" aria-hidden="true">
          <path d="M3 0h2v3h3v2H5v3H3V5H0V3h3z" fill="#444" />
        </svg>
      </button>
      <svg width="14" height="12" viewBox="0 0 14 12" fill="none" className="flex-shrink-0 self-end" aria-hidden="true">
        <path d="M2 12L14 0M6 12l8-8M10 12l4-4" stroke="#6e6d68" strokeWidth="1.500" />
      </svg>
    </footer>
  )
}

export default function App() {
  return (
    <div className="h-screen bg-linear-to-b from-[#0c5c70] to-[#3c7a1c] font-['DejaVu_Sans',sans-serif] text-[10px] text-[#111]">
      <IconDefs />
      <div className="flex h-full flex-col rounded-t-[6px] rounded-b-[3px] border border-black bg-[#a3a3a1] px-[3px] pb-1">
        <TitleBar />
        <MenuBar />
        <StandardBar />
        <FormatBar />
        <TabBar />
        <div className="flex min-h-0 flex-1">
          <Page />
          <ScrollBar />
        </div>
        <DrawBar />
        <StatusBar />
      </div>
    </div>
  )
}
